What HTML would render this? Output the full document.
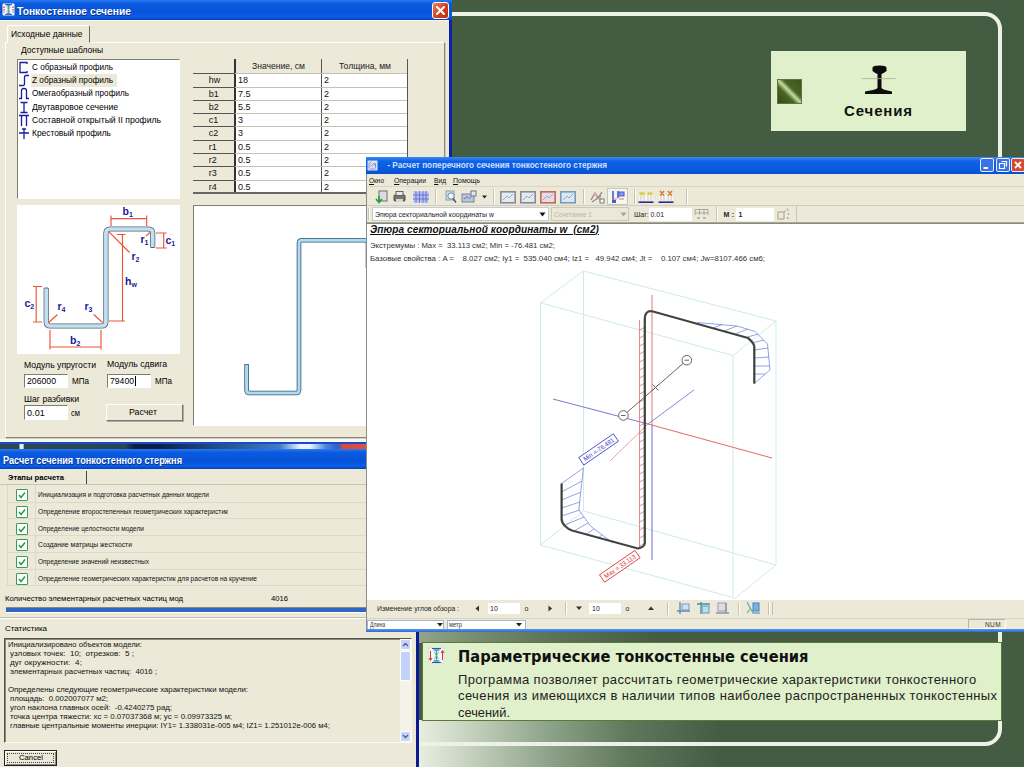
<!DOCTYPE html>
<html lang="ru"><head><meta charset="utf-8"><title>Параметрические тонкостенные сечения</title>
<style>
html,body{margin:0;padding:0;background:#445c42;}
body{width:1024px;height:767px;overflow:hidden;position:relative;font-family:"Liberation Sans",sans-serif;}
#stage{position:absolute;left:0;top:0;width:1024px;height:767px;overflow:hidden;background:#445c42;}
#stage div,#stage span,#stage svg,#stage p{position:absolute;box-sizing:border-box;margin:0;padding:0;}
.t{white-space:pre;font-kerning:none;transform-origin:0 50%;}
.face{background:#ece9d8;}
.sunk{border:1px solid;border-color:#7f7d6f #fff #fff #7f7d6f;background:#fff;}

</style></head>
<body>
<div id="stage">
<div style="left:419px;top:720px;width:605px;height:47px;background:linear-gradient(90deg,#e8eee0 0px,#c6d2be 50px,#90a68c 125px,#5f775b 210px,#445c42 300px);"></div>
<div style="left:419px;top:632px;width:605px;height:11px;background:linear-gradient(90deg,#93a488 0px,#7a8f72 50px,#5c7458 130px,#445c42 240px);"></div>
<div style="left:-60px;top:12px;width:1062px;height:734px;border:4px solid #ecf3e6;border-radius:17px;"></div>
<div style="left:771px;top:51px;width:195px;height:80px;background:#e0f0ca;"></div>
<div style="left:776.5px;top:78.5px;width:25.5px;height:25.5px;background:linear-gradient(45deg,#34481c 0%,#4a6426 36%,#c4dc9c 50%,#4a6426 62%,#3c5420 100%);border:1px solid #5a763c;"></div>
<span class="t" id="t0" style="left:844px;top:101.00px;font:bold 15px/19px 'Liberation Sans',sans-serif;color:#111;letter-spacing:0.873px;">Сечения</span>
<svg style="left:860px;top:62px;" width="38" height="34" viewBox="0 0 38 34"><path d="M12.500 5.500 Q13 3.500 19.500 3.500 Q26 3.500 26.500 5.500 L26.500 9 Q23.500 11.500 21.500 12 L21.500 26 Q22 27.500 32 29.500 L32 32 L5 32 L5 29.500 Q17 27.500 17.500 26 L17.500 12 Q15.500 11.500 12.500 9 Z" fill="#0c0c0c"/><path d="M2 16.600 H35.500" stroke="#a4b096" stroke-width="0.800"/></svg>
<div style="left:422px;top:642px;width:580px;height:79px;background:#e0f0ca;border:1px solid #587a3c;"></div>
<span class="t" id="t1" style="left:458px;top:648.00px;font:bold 15px/19px 'DejaVu Sans','Liberation Sans',sans-serif;color:#111;transform:scaleX(0.9771);">Параметрические тонкостенные сечения</span>
<span class="t" id="t2" style="left:458px;top:671.50px;font:13px/16px 'Liberation Sans',sans-serif;color:#222;letter-spacing:0.384px;">Программа позволяет рассчитать геометрические характеристики тонкостенного</span>
<span class="t" id="t3" style="left:458px;top:688.00px;font:13px/16px 'Liberation Sans',sans-serif;color:#222;letter-spacing:0.408px;">сечения из имеющихся в наличии типов наиболее распространенных тонкостенных</span>
<span class="t" id="t4" style="left:458px;top:704.50px;font:13px/16px 'Liberation Sans',sans-serif;color:#222;transform:scaleX(0.9881);">сечений.</span>
<svg style="left:426.5px;top:645.5px;" width="19" height="19" viewBox="0 0 19 19"><rect x="2" y="2" width="15" height="15" fill="#f4f8fa" stroke="#c8d4dc" stroke-width="0.600"/><path d="M6.500 4 H12.500 M9.500 4 V15 M6.500 15 H12.500" stroke="#3aa0a8" stroke-width="1.500" fill="none"/><path d="M7 6 L12 13 M12 6 L7 13" stroke="#58b070" stroke-width="0.700"/><path d="M3.500 5 V14 M15.500 5 V14 M2 12 L3.500 14.500 L5 12 M14 7 L15.500 4.500 L17 7" stroke="#e03030" stroke-width="1" fill="none"/><path d="M5 2.500 H14 M5 16.500 H14" stroke="#3a48d0" stroke-width="1"/></svg>
<div style="left:0px;top:0px;width:452px;height:442px;background:#ece9d8;border-right:3px solid #0a22a8;"></div>
<div style="left:0px;top:0px;width:452px;height:20px;background:linear-gradient(180deg,#2a78f0 0%,#0a5ae0 18%,#0653d8 60%,#0a5fe8 85%,#0440b8 100%);"></div>
<div style="left:0px;top:20px;width:449px;height:1px;background:#f8f8f4;"></div>
<span class="t" id="t5" style="left:17px;top:3.50px;font:bold 11px/14px 'Liberation Sans',sans-serif;color:#fff;text-shadow:0.5px 0.5px 0 #0a2a80;transform:scaleX(0.9335);">Тонкостенное сечение</span>
<svg style="left:2px;top:3px;" width="13" height="13" viewBox="0 0 13 13"><rect x="0.500" y="0.500" width="12" height="12" rx="1" fill="#f4f8fc"/><path d="M4.500 2.500 H8.500 M6.500 2.500 V10.500 M4.500 10.500 H8.500" stroke="#3aa0b0" stroke-width="1.300" fill="none"/><path d="M4.500 4 L8.500 9 M8.500 4 L4.500 9" stroke="#58b070" stroke-width="0.600"/><path d="M2 3.500 V9.500 M11 3.500 V9.500" stroke="#e03030" stroke-width="1.200" stroke-dasharray="1.500 1"/><path d="M3 1.500 H10 M3 11.500 H10" stroke="#3a48d0" stroke-width="0.900"/></svg>
<div style="left:432px;top:2px;width:17px;height:17px;background:linear-gradient(135deg,#e8805f,#d4401c 55%,#b83010);border:1px solid #fff;border-radius:3px;"></div>
<svg style="left:432px;top:2px;" width="17" height="17" viewBox="0 0 17 17"><path d="M5 5 L12 12 M12 5 L5 12" stroke="#fff" stroke-width="2" stroke-linecap="round"/></svg>
<div style="left:5px;top:42px;width:440px;height:396px;background:#ece9d8;border:1px solid;border-color:#fff #8a8878 #8a8878 #fff;box-shadow:1px 1px 0 #d0cdbd;"></div>
<div style="left:7px;top:25px;width:83px;height:18px;background:#ece9d8;border:1px solid;border-color:#fff #6a685c #ece9d8 #fff;border-radius:2px 2px 0 0;"></div>
<span class="t" id="t6" style="left:10.5px;top:28.50px;font:9px/11px 'Liberation Sans',sans-serif;color:#000;transform:scaleX(0.9402);">Исходные данные</span>
<span class="t" id="t7" style="left:21px;top:45.00px;font:9px/11px 'Liberation Sans',sans-serif;color:#000;transform:scaleX(0.9422);">Доступные шаблоны</span>
<div class="sunk" style="left:17px;top:59px;width:163px;height:140px;"></div>
<div style="left:31px;top:74px;width:86px;height:13px;background:#ece9d8;"></div>
<span class="t" id="t8" style="left:32px;top:62.00px;font:9px/11px 'Liberation Sans',sans-serif;color:#000;transform:scaleX(0.9058);">С образный профиль</span>
<span class="t" id="t9" style="left:32px;top:75.20px;font:9px/11px 'Liberation Sans',sans-serif;color:#000;transform:scaleX(0.9161);">Z образный профиль</span>
<span class="t" id="t10" style="left:32px;top:88.40px;font:9px/11px 'Liberation Sans',sans-serif;color:#000;transform:scaleX(0.9089);">Омегаобразный профиль</span>
<span class="t" id="t11" style="left:32px;top:101.60px;font:9px/11px 'Liberation Sans',sans-serif;color:#000;transform:scaleX(0.9546);">Двутавровое сечение</span>
<span class="t" id="t12" style="left:32px;top:114.80px;font:9px/11px 'Liberation Sans',sans-serif;color:#000;transform:scaleX(0.9588);">Составной открытый II профиль</span>
<span class="t" id="t13" style="left:32px;top:128.00px;font:9px/11px 'Liberation Sans',sans-serif;color:#000;transform:scaleX(0.9313);">Крестовый профиль</span>
<svg style="left:18px;top:61.0px;" width="12" height="13" viewBox="0 0 12 13"><g fill="none" stroke="#1c1c9c" stroke-width="1.3"><path d="M9 3 V1.5 H2 V11.5 H9 V10" /></g></svg>
<svg style="left:18px;top:74.2px;" width="12" height="13" viewBox="0 0 12 13"><g fill="none" stroke="#1c1c9c" stroke-width="1.3"><path d="M1 11.5 H5 Q6.5 11.5 6.5 10 V3 Q6.5 1.5 8 1.5 H11" /></g></svg>
<svg style="left:18px;top:87.4px;" width="12" height="13" viewBox="0 0 12 13"><g fill="none" stroke="#1c1c9c" stroke-width="1.3"><path d="M1 11.5 H3.5 V3.5 Q3.5 1.5 6 1.5 Q8.5 1.5 8.5 3.5 V11.5 H11" /></g></svg>
<svg style="left:18px;top:100.6px;" width="12" height="13" viewBox="0 0 12 13"><g fill="none" stroke="#1c1c9c" stroke-width="1.3"><path d="M2.5 1.5 H9.500 M6 1.5 V11.5 M2.5 11.5 H9.5" /></g></svg>
<svg style="left:18px;top:113.8px;" width="12" height="13" viewBox="0 0 12 13"><g fill="none" stroke="#1c1c9c" stroke-width="1.3"><path d="M1 1.5 H11 M3.5 1.5 V12 M8.5 1.5 V12" /></g></svg>
<svg style="left:18px;top:127.0px;" width="12" height="13" viewBox="0 0 12 13"><g fill="none" stroke="#1c1c9c" stroke-width="1.3"><path d="M1 6 H11 M6 2 V12 M4 2 H8" /></g></svg>
<div style="left:193px;top:73px;width:215px;height:121px;background:#fff;"></div>
<div style="left:193px;top:73px;width:42px;height:121px;background:#ece9d8;"></div>
<div style="left:234px;top:59px;width:174px;height:15px;background:#ece9d8;border-bottom:1px solid #444;"></div>
<div style="left:234px;top:59px;width:2px;height:135px;background:#333;"></div>
<div style="left:321px;top:59px;width:1px;height:135px;background:#555;"></div>
<div style="left:407px;top:59px;width:1px;height:135px;background:#555;"></div>
<div style="left:193px;top:192px;width:215px;height:2px;background:#666;"></div>
<span class="t" id="t14" style="left:251.5px;top:61.00px;font:9px/11px 'Liberation Sans',sans-serif;color:#222;transform:scaleX(0.9531);">Значение, см</span>
<span class="t" id="t15" style="left:339px;top:61.00px;font:9px/11px 'Liberation Sans',sans-serif;color:#222;transform:scaleX(0.9517);">Толщина, мм</span>
<div style="left:235px;top:73px;width:172px;height:1px;background:#c4c2b6;"></div>
<div style="left:193px;top:73px;width:42px;height:1px;background:#555;"></div>
<span class="t" id="t16" style="left:208.8px;top:75.20px;font:9px/11px 'Liberation Sans',sans-serif;color:#111;">hw</span>
<span class="t" id="t17" style="left:238px;top:75.20px;font:9px/11px 'Liberation Sans',sans-serif;color:#111;">18</span>
<span class="t" id="t18" style="left:324px;top:75.20px;font:9px/11px 'Liberation Sans',sans-serif;color:#111;">2</span>
<div style="left:235px;top:87px;width:172px;height:1px;background:#c4c2b6;"></div>
<div style="left:193px;top:87px;width:42px;height:1px;background:#555;"></div>
<span class="t" id="t19" style="left:208.8px;top:88.50px;font:9px/11px 'Liberation Sans',sans-serif;color:#111;">b1</span>
<span class="t" id="t20" style="left:238px;top:88.50px;font:9px/11px 'Liberation Sans',sans-serif;color:#111;">7.5</span>
<span class="t" id="t21" style="left:324px;top:88.50px;font:9px/11px 'Liberation Sans',sans-serif;color:#111;">2</span>
<div style="left:235px;top:100px;width:172px;height:1px;background:#c4c2b6;"></div>
<div style="left:193px;top:100px;width:42px;height:1px;background:#555;"></div>
<span class="t" id="t22" style="left:208.8px;top:101.80px;font:9px/11px 'Liberation Sans',sans-serif;color:#111;">b2</span>
<span class="t" id="t23" style="left:238px;top:101.80px;font:9px/11px 'Liberation Sans',sans-serif;color:#111;">5.5</span>
<span class="t" id="t24" style="left:324px;top:101.80px;font:9px/11px 'Liberation Sans',sans-serif;color:#111;">2</span>
<div style="left:235px;top:113px;width:172px;height:1px;background:#c4c2b6;"></div>
<div style="left:193px;top:113px;width:42px;height:1px;background:#555;"></div>
<span class="t" id="t25" style="left:208.8px;top:115.10px;font:9px/11px 'Liberation Sans',sans-serif;color:#111;">c1</span>
<span class="t" id="t26" style="left:238px;top:115.10px;font:9px/11px 'Liberation Sans',sans-serif;color:#111;">3</span>
<span class="t" id="t27" style="left:324px;top:115.10px;font:9px/11px 'Liberation Sans',sans-serif;color:#111;">2</span>
<div style="left:235px;top:126px;width:172px;height:1px;background:#c4c2b6;"></div>
<div style="left:193px;top:126px;width:42px;height:1px;background:#555;"></div>
<span class="t" id="t28" style="left:208.8px;top:128.40px;font:9px/11px 'Liberation Sans',sans-serif;color:#111;">c2</span>
<span class="t" id="t29" style="left:238px;top:128.40px;font:9px/11px 'Liberation Sans',sans-serif;color:#111;">3</span>
<span class="t" id="t30" style="left:324px;top:128.40px;font:9px/11px 'Liberation Sans',sans-serif;color:#111;">2</span>
<div style="left:235px;top:140px;width:172px;height:1px;background:#c4c2b6;"></div>
<div style="left:193px;top:140px;width:42px;height:1px;background:#555;"></div>
<span class="t" id="t31" style="left:208.8px;top:141.70px;font:9px/11px 'Liberation Sans',sans-serif;color:#111;">r1</span>
<span class="t" id="t32" style="left:238px;top:141.70px;font:9px/11px 'Liberation Sans',sans-serif;color:#111;">0.5</span>
<span class="t" id="t33" style="left:324px;top:141.70px;font:9px/11px 'Liberation Sans',sans-serif;color:#111;">2</span>
<div style="left:235px;top:153px;width:172px;height:1px;background:#c4c2b6;"></div>
<div style="left:193px;top:153px;width:42px;height:1px;background:#555;"></div>
<span class="t" id="t34" style="left:208.8px;top:155.00px;font:9px/11px 'Liberation Sans',sans-serif;color:#111;">r2</span>
<span class="t" id="t35" style="left:238px;top:155.00px;font:9px/11px 'Liberation Sans',sans-serif;color:#111;">0.5</span>
<span class="t" id="t36" style="left:324px;top:155.00px;font:9px/11px 'Liberation Sans',sans-serif;color:#111;">2</span>
<div style="left:235px;top:166px;width:172px;height:1px;background:#c4c2b6;"></div>
<div style="left:193px;top:166px;width:42px;height:1px;background:#555;"></div>
<span class="t" id="t37" style="left:208.8px;top:168.30px;font:9px/11px 'Liberation Sans',sans-serif;color:#111;">r3</span>
<span class="t" id="t38" style="left:238px;top:168.30px;font:9px/11px 'Liberation Sans',sans-serif;color:#111;">0.5</span>
<span class="t" id="t39" style="left:324px;top:168.30px;font:9px/11px 'Liberation Sans',sans-serif;color:#111;">2</span>
<div style="left:235px;top:180px;width:172px;height:1px;background:#c4c2b6;"></div>
<div style="left:193px;top:180px;width:42px;height:1px;background:#555;"></div>
<span class="t" id="t40" style="left:208.8px;top:181.60px;font:9px/11px 'Liberation Sans',sans-serif;color:#111;">r4</span>
<span class="t" id="t41" style="left:238px;top:181.60px;font:9px/11px 'Liberation Sans',sans-serif;color:#111;">0.5</span>
<span class="t" id="t42" style="left:324px;top:181.60px;font:9px/11px 'Liberation Sans',sans-serif;color:#111;">2</span>
<div style="left:17px;top:205px;width:163px;height:149px;background:#fff;"></div>
<div class="sunk" style="left:193px;top:205px;width:252px;height:221px;"></div>
<svg style="left:17px;top:205px;" width="163" height="149" viewBox="17 205 163 149"><path d="M152.700 247.500 V233.300 Q152.700 229 148.400 229 H110.200 Q105.900 229 105.900 233.300 V321.700 Q105.900 326 101.600 326 H50.500 Q46.200 326 46.200 321.700 V288" stroke="#59636b" stroke-width="5.200" fill="none"/><path d="M152.700 247.500 V233.300 Q152.700 229 148.400 229 H110.200 Q105.900 229 105.900 233.300 V321.700 Q105.900 326 101.600 326 H50.500 Q46.200 326 46.200 321.700 V288" stroke="#c2e0f4" stroke-width="3.700" fill="none"/><path d="M150.900 247.500 H154.500 M44.400 288 H48" stroke="#4a545c" stroke-width="0.900"/><g stroke="#ec5436" stroke-width="1.150" fill="none"><path d="M111 218.600 H146.700 M111 215.500 V226 M146.700 215.500 V226 M146 236 L150.600 231.800"/><path d="M163.700 233 V248 M156 233 H166.500 M156 248 H166.500"/><path d="M122.500 234.500 V321 M117 234.500 H125.500 M109 321 H125"/><path d="M109 231.800 L129.500 252.500"/><path d="M36.200 286.500 V322 M33 286.500 H42 M33 322 H42"/><path d="M50 347 H101 M50 330 V349.500 M101 330 V349.500"/><path d="M57.500 314.500 L48.700 322.500 M93.700 314.500 L102.500 322.500"/></g><text x="122.5" y="215" font-family="Liberation Sans, sans-serif" font-weight="bold" font-size="10.500" fill="#1a1a9a">b<tspan font-size="7" dy="2">1</tspan></text><text x="140.5" y="242.5" font-family="Liberation Sans, sans-serif" font-weight="bold" font-size="10.500" fill="#1a1a9a">r<tspan font-size="7" dy="2">1</tspan></text><text x="165.5" y="244" font-family="Liberation Sans, sans-serif" font-weight="bold" font-size="10.500" fill="#1a1a9a">c<tspan font-size="7" dy="2">1</tspan></text><text x="131.5" y="259.5" font-family="Liberation Sans, sans-serif" font-weight="bold" font-size="10.500" fill="#1a1a9a">r<tspan font-size="7" dy="2">2</tspan></text><text x="125" y="285" font-family="Liberation Sans, sans-serif" font-weight="bold" font-size="10.500" fill="#1a1a9a">h<tspan font-size="7" dy="2">w</tspan></text><text x="24.5" y="307" font-family="Liberation Sans, sans-serif" font-weight="bold" font-size="10.500" fill="#1a1a9a">c<tspan font-size="7" dy="2">2</tspan></text><text x="57.5" y="309.5" font-family="Liberation Sans, sans-serif" font-weight="bold" font-size="10.500" fill="#1a1a9a">r<tspan font-size="7" dy="2">4</tspan></text><text x="84.5" y="310" font-family="Liberation Sans, sans-serif" font-weight="bold" font-size="10.500" fill="#1a1a9a">r<tspan font-size="7" dy="2">3</tspan></text><text x="70" y="343.5" font-family="Liberation Sans, sans-serif" font-weight="bold" font-size="10.500" fill="#1a1a9a">b<tspan font-size="7" dy="2">2</tspan></text></svg>
<svg style="left:194px;top:207px;" width="250" height="219" viewBox="194 207 250 219"><path d="M368 268 V243.200 Q368 240.200 365 240.200 H302 Q299 240.200 299 243.200 V390 Q299 393 296 393 H249.600 Q246.600 393 246.600 390 V364.600" stroke="#3f5666" stroke-width="4.600" fill="none"/><path d="M368 268 V243.200 Q368 240.200 365 240.200 H302 Q299 240.200 299 243.200 V390 Q299 393 296 393 H249.600 Q246.600 393 246.600 390 V364.600" stroke="#a9dcf6" stroke-width="3" fill="none"/><path d="M244.300 364.600 H248.900" stroke="#3f5666" stroke-width="0.800"/></svg>
<span class="t" id="t43" style="left:24px;top:359.50px;font:9px/11px 'Liberation Sans',sans-serif;color:#000;transform:scaleX(0.9610);">Модуль упругости</span>
<span class="t" id="t44" style="left:107px;top:358.50px;font:9px/11px 'Liberation Sans',sans-serif;color:#000;transform:scaleX(0.9668);">Модуль сдвига</span>
<div class="sunk" style="left:24px;top:374px;width:44px;height:14px;"></div>
<div class="sunk" style="left:107px;top:374px;width:44px;height:14px;"></div>
<span class="t" id="t45" style="left:27px;top:376.00px;font:9px/11px 'Liberation Sans',sans-serif;color:#000;transform:scaleX(0.9652);">206000</span>
<span class="t" id="t46" style="left:110px;top:376.00px;font:9px/11px 'Liberation Sans',sans-serif;color:#000;transform:scaleX(0.9588);">79400</span>
<div style="left:134.5px;top:376px;width:1px;height:10px;background:#000;"></div>
<span class="t" id="t47" style="left:72px;top:376.00px;font:9px/11px 'Liberation Sans',sans-serif;color:#000;transform:scaleX(0.8955);">МПа</span>
<span class="t" id="t48" style="left:155px;top:376.00px;font:9px/11px 'Liberation Sans',sans-serif;color:#000;transform:scaleX(0.8955);">МПа</span>
<span class="t" id="t49" style="left:24px;top:394.00px;font:9px/11px 'Liberation Sans',sans-serif;color:#000;transform:scaleX(0.9665);">Шаг разбивки</span>
<div class="sunk" style="left:24px;top:405px;width:44px;height:15px;"></div>
<span class="t" id="t50" style="left:27px;top:407.50px;font:9px/11px 'Liberation Sans',sans-serif;color:#000;letter-spacing:0.117px;">0.01</span>
<span class="t" id="t51" style="left:71px;top:407.50px;font:9px/11px 'Liberation Sans',sans-serif;color:#000;transform:scaleX(0.8421);">см</span>
<div style="left:106px;top:404px;width:77px;height:17px;background:#ece9d8;border:1px solid;border-color:#fff #777 #777 #fff;box-shadow:1px 1px 0 #aaa;"></div>
<span class="t" id="t52" style="left:129px;top:407.00px;font:9px/11px 'Liberation Sans',sans-serif;color:#000;transform:scaleX(0.9776);">Расчет</span>
<div style="left:0px;top:439px;width:449.7px;height:3px;background:#faf9f4;"></div>
<div style="left:0px;top:442px;width:366px;height:7px;background:linear-gradient(90deg,#2c4a4e 0px,#2c4a4e 19px,#e8eef0 20px,#e8eef0 23px,#2c4a4e 24.500px,#27464e 125px,#0a1e48 135px,#0a1e48 158px,#173a6c 190px,#2a5e9c 240px,#3f7cc8 280px,#e8f4ff 300px,#e8f4ff 310px,#4a86dc 326px,#2a62c8 338px,#d84a3a 343px,#e05040 366px);border-top:2px solid #174ad0;"></div>
<div style="left:0px;top:449px;width:419px;height:318px;background:#ece9d8;border-right:3px solid #0a1a90;"></div>
<div style="left:0px;top:449px;width:419px;height:20px;background:linear-gradient(180deg,#2a78f0 0%,#0a5ae0 18%,#0653d8 60%,#0a5fe8 85%,#0440b8 100%);"></div>
<span class="t" id="t53" style="left:3px;top:452.50px;font:bold 11px/14px 'Liberation Sans',sans-serif;color:#fff;text-shadow:0.5px 0.5px 0 #0a2a80;transform:scaleX(0.8336);">Расчет сечения тонкостенного стержня</span>
<span class="t" id="t54" style="left:8px;top:473.00px;font:bold 8px/10px 'Liberation Sans',sans-serif;color:#000;transform:scaleX(0.9509);">Этапы расчета</span>
<div style="left:86px;top:471px;width:1px;height:13px;background:#444;"></div>
<div style="left:0px;top:484px;width:417px;height:1px;background:#c9c6b6;"></div>
<div style="left:7px;top:501.5px;width:410px;height:1px;background:#dcd9c8;"></div>
<div style="left:16px;top:489.0px;width:12px;height:12px;background:#fff;border:1px solid #3a9a5a;border-radius:1px;"></div>
<svg style="left:16px;top:489.0px;" width="12" height="12" viewBox="0 0 12 12"><path d="M3 6 L5 8.5 L9 3.5" stroke="#2a9a4a" stroke-width="1.5" fill="none"/></svg>
<span class="t" id="t55" style="left:38px;top:490.00px;font:7px/9px 'Liberation Sans',sans-serif;color:#111;transform:scaleX(0.9328);">Инициализация и подготовка расчетных данных модели</span>
<div style="left:7px;top:518.25px;width:410px;height:1px;background:#dcd9c8;"></div>
<div style="left:16px;top:505.75px;width:12px;height:12px;background:#fff;border:1px solid #3a9a5a;border-radius:1px;"></div>
<svg style="left:16px;top:505.75px;" width="12" height="12" viewBox="0 0 12 12"><path d="M3 6 L5 8.5 L9 3.5" stroke="#2a9a4a" stroke-width="1.5" fill="none"/></svg>
<span class="t" id="t56" style="left:38px;top:506.75px;font:7px/9px 'Liberation Sans',sans-serif;color:#111;transform:scaleX(0.9459);">Определение второстепенных геометрических характеристик</span>
<div style="left:7px;top:535.0px;width:410px;height:1px;background:#dcd9c8;"></div>
<div style="left:16px;top:522.5px;width:12px;height:12px;background:#fff;border:1px solid #3a9a5a;border-radius:1px;"></div>
<svg style="left:16px;top:522.5px;" width="12" height="12" viewBox="0 0 12 12"><path d="M3 6 L5 8.5 L9 3.5" stroke="#2a9a4a" stroke-width="1.5" fill="none"/></svg>
<span class="t" id="t57" style="left:38px;top:523.50px;font:7px/9px 'Liberation Sans',sans-serif;color:#111;transform:scaleX(0.9366);">Определение целостности модели</span>
<div style="left:7px;top:551.75px;width:410px;height:1px;background:#dcd9c8;"></div>
<div style="left:16px;top:539.25px;width:12px;height:12px;background:#fff;border:1px solid #3a9a5a;border-radius:1px;"></div>
<svg style="left:16px;top:539.25px;" width="12" height="12" viewBox="0 0 12 12"><path d="M3 6 L5 8.5 L9 3.5" stroke="#2a9a4a" stroke-width="1.5" fill="none"/></svg>
<span class="t" id="t58" style="left:38px;top:540.25px;font:7px/9px 'Liberation Sans',sans-serif;color:#111;transform:scaleX(0.9691);">Создание матрицы жесткости</span>
<div style="left:7px;top:568.5px;width:410px;height:1px;background:#dcd9c8;"></div>
<div style="left:16px;top:556.0px;width:12px;height:12px;background:#fff;border:1px solid #3a9a5a;border-radius:1px;"></div>
<svg style="left:16px;top:556.0px;" width="12" height="12" viewBox="0 0 12 12"><path d="M3 6 L5 8.5 L9 3.5" stroke="#2a9a4a" stroke-width="1.5" fill="none"/></svg>
<span class="t" id="t59" style="left:38px;top:557.00px;font:7px/9px 'Liberation Sans',sans-serif;color:#111;transform:scaleX(0.9272);">Определение значений неизвестных</span>
<div style="left:7px;top:585.25px;width:410px;height:1px;background:#dcd9c8;"></div>
<div style="left:16px;top:572.75px;width:12px;height:12px;background:#fff;border:1px solid #3a9a5a;border-radius:1px;"></div>
<svg style="left:16px;top:572.75px;" width="12" height="12" viewBox="0 0 12 12"><path d="M3 6 L5 8.5 L9 3.5" stroke="#2a9a4a" stroke-width="1.5" fill="none"/></svg>
<span class="t" id="t60" style="left:38px;top:573.75px;font:7px/9px 'Liberation Sans',sans-serif;color:#111;transform:scaleX(0.9423);">Определение геометрических характеристик для расчетов на кручение</span>
<div style="left:35px;top:485px;width:1px;height:101px;background:#dcd9c8;"></div>
<div style="left:7px;top:485px;width:1px;height:101px;background:#dcd9c8;"></div>
<span class="t" id="t61" style="left:5px;top:593.50px;font:8px/10px 'Liberation Sans',sans-serif;color:#000;transform:scaleX(0.9640);">Количество элементарных расчетных частиц мод</span>
<span class="t" id="t62" style="left:271px;top:593.50px;font:8px/10px 'Liberation Sans',sans-serif;color:#000;transform:scaleX(0.9552);">4016</span>
<div style="left:6px;top:607px;width:411px;height:6px;background:#2f66c6;border-top:1px solid #8a8878;border-bottom:1px solid #fff;"></div>
<div style="left:0px;top:617px;width:417px;height:1px;background:#c0bdae;"></div>
<div style="left:0px;top:618px;width:417px;height:1px;background:#fff;"></div>
<span class="t" id="t63" style="left:5px;top:624.00px;font:8px/10px 'Liberation Sans',sans-serif;color:#000;transform:scaleX(0.9996);">Статистика</span>
<div style="left:4px;top:638px;width:408px;height:105px;background:#ece9d8;border:1px solid;border-color:#55534a #f8f8f0 #f8f8f0 #55534a;box-shadow:inset 1px 1px 0 #8a887a;"></div>
<span class="t" id="t64" style="left:8px;top:639.50px;font:8px/10px 'Liberation Sans',sans-serif;color:#111;transform:scaleX(0.9551);">Инициализировано объектов модели:</span>
<span class="t" id="t65" style="left:10px;top:648.60px;font:8px/10px 'Liberation Sans',sans-serif;color:#111;letter-spacing:0.017px;">узловых точек:  10;  отрезков:  5 ;</span>
<span class="t" id="t66" style="left:10px;top:657.70px;font:8px/10px 'Liberation Sans',sans-serif;color:#111;letter-spacing:0.110px;">дуг окружности:  4;</span>
<span class="t" id="t67" style="left:10px;top:666.80px;font:8px/10px 'Liberation Sans',sans-serif;color:#111;transform:scaleX(0.9689);">элементарных расчетных частиц:  4016 ;</span>
<span class="t" id="t68" style="left:8px;top:685.00px;font:8px/10px 'Liberation Sans',sans-serif;color:#111;transform:scaleX(0.9747);">Определены следующие геометрические характеристики модели:</span>
<span class="t" id="t69" style="left:10px;top:694.10px;font:8px/10px 'Liberation Sans',sans-serif;color:#111;transform:scaleX(0.9685);">площадь:  0.002007077 м2;</span>
<span class="t" id="t70" style="left:10px;top:703.20px;font:8px/10px 'Liberation Sans',sans-serif;color:#111;transform:scaleX(0.9777);">угол наклона главных осей:  -0.4240275 рад;</span>
<span class="t" id="t71" style="left:10px;top:712.30px;font:8px/10px 'Liberation Sans',sans-serif;color:#111;transform:scaleX(0.9833);">точка центра тяжести: xc = 0.07037368 м; yc = 0.09973325 м;</span>
<span class="t" id="t72" style="left:10px;top:721.40px;font:8px/10px 'Liberation Sans',sans-serif;color:#111;transform:scaleX(0.9630);">главные центральные моменты инерции: IY1= 1.338031e-005 м4; IZ1= 1.251012e-006 м4;</span>
<div style="left:400px;top:639px;width:11px;height:103px;background:#f4f3ea;"></div>
<div style="left:400px;top:639px;width:11px;height:11px;background:#c6d4f8;border:1px solid #fff;border-radius:2px;"></div>
<div style="left:400px;top:731px;width:11px;height:11px;background:#c6d4f8;border:1px solid #fff;border-radius:2px;"></div>
<div style="left:400px;top:651px;width:11px;height:30px;background:#c2d2fa;border:1px solid #fff;border-radius:2px;"></div>
<svg style="left:400px;top:639px;" width="11" height="11" viewBox="0 0 11 11"><path d="M3 7 L5.5 4.500 L8 7" stroke="#4a60a0" stroke-width="1.4" fill="none"/></svg>
<svg style="left:400px;top:731px;" width="11" height="11" viewBox="0 0 11 11"><path d="M3 4 L5.5 6.500 L8 4" stroke="#4a60a0" stroke-width="1.4" fill="none"/></svg>
<div style="left:4px;top:750px;width:53px;height:16px;background:#ece9d8;border:1px solid #222;box-shadow:inset 1px 1px 0 #fff, inset -1px -1px 0 #888;"></div>
<div style="left:7px;top:753px;width:47px;height:10px;border:1px dotted #444;"></div>
<span class="t" id="t73" style="left:18.5px;top:753.00px;font:8px/10px 'Liberation Sans',sans-serif;color:#000;transform:scaleX(0.9636);">Cancel</span>
<div style="left:366px;top:157px;width:658px;height:475px;background:#ece9d8;border-left:1.200px solid #8c8c8c;"></div>
<div style="left:366px;top:157px;width:658px;height:17px;background:linear-gradient(180deg,#3a88f4 0%,#0f62e6 25%,#0a5ae0 70%,#0a50d0 100%);"></div>
<span class="t" id="t74" style="left:385px;top:160.00px;font:bold 9px/11px 'Liberation Sans',sans-serif;color:#cfe0ff;transform:scaleX(0.9131);"> - Расчет поперечного сечения тонкостенного стержня</span>
<svg style="left:367px;top:159.5px;" width="11" height="11" viewBox="0 0 11 11"><rect x="0.500" y="0.500" width="10" height="10" fill="#d4e2fa"/><path d="M2 8.500 V3.500 L4 2 M3 9 H8.500 M8.500 3 V8" stroke="#8a9ac8" fill="none"/><circle cx="5" cy="5.500" r="1.800" fill="#e8b8c8"/><path d="M6 3 L8.500 5.500" stroke="#7a8a9a"/></svg>
<div style="left:980px;top:158px;width:14px;height:14px;background:#3a72e8;border:1px solid #e8eefc;border-radius:2px;"></div>
<div style="left:995.5px;top:158px;width:14px;height:14px;background:#3a72e8;border:1px solid #e8eefc;border-radius:2px;"></div>
<div style="left:1011px;top:158px;width:14px;height:14px;background:#d8482a;border:1px solid #e8eefc;border-radius:2px;"></div>
<svg style="left:980px;top:158px;" width="14" height="14" viewBox="0 0 14 14"><path d="M3.5 10 H8" stroke="#fff" stroke-width="2"/></svg>
<svg style="left:995.5px;top:158px;" width="14" height="14" viewBox="0 0 14 14"><path d="M5.5 3.5 H10.5 V8.5 M3.5 5.5 H8.5 V10.5 H3.500 Z" stroke="#fff" stroke-width="1.2" fill="none"/></svg>
<svg style="left:1011px;top:158px;" width="14" height="14" viewBox="0 0 14 14"><path d="M4 4 L10 10 M10 4 L4 10" stroke="#fff" stroke-width="1.8"/></svg>
<span class="t" id="t75" style="left:369px;top:175.50px;font:7px/9px 'Liberation Sans',sans-serif;color:#111;transform:scaleX(0.9213);"><u>О</u>кно</span>
<span class="t" id="t76" style="left:394px;top:175.50px;font:7px/9px 'Liberation Sans',sans-serif;color:#111;transform:scaleX(0.9766);"><u>О</u>перации</span>
<span class="t" id="t77" style="left:434px;top:175.50px;font:7px/9px 'Liberation Sans',sans-serif;color:#111;transform:scaleX(0.9470);"><u>В</u>ид</span>
<span class="t" id="t78" style="left:453px;top:175.50px;font:7px/9px 'Liberation Sans',sans-serif;color:#111;transform:scaleX(0.9983);"><u>П</u>омощь</span>
<div style="left:367px;top:186px;width:657px;height:1px;background:#d8d5c4;"></div>
<div style="left:367px;top:205px;width:657px;height:1px;background:#d0cdbc;"></div>
<div style="left:367px;top:223px;width:657px;height:377px;background:#fff;border-top:1px solid #8a8878;"></div>
<div style="left:367px;top:222px;width:657px;height:1px;background:#aaa898;"></div>
<svg style="left:375px;top:190px;" width="13" height="14" viewBox="0 0 13 14"><rect x="4" y="1" width="8" height="10" fill="#d8dde2" stroke="#6a7078"/><path d="M1 9 L4 12.5 L7 9 M4 12 V6" stroke="#2a9a4a" stroke-width="1.6" fill="none"/></svg>
<svg style="left:393px;top:190px;" width="13" height="14" viewBox="0 0 13 14"><rect x="1" y="5" width="11" height="6" rx="1" fill="#77756f" stroke="#4a4a46"/><rect x="3" y="1.5" width="7" height="4" fill="#e8e8e4" stroke="#66645e"/><rect x="3" y="9" width="7" height="3" fill="#d8d8d2"/></svg>
<svg style="left:413px;top:190px;" width="16" height="14" viewBox="0 0 16 14"><rect x="0.5" y="1.5" width="15" height="11" fill="#b9c0ee"/><path d="M3 1 V13 M6.500 1 V13 M10 1 V13 M13 1 V13 M0 5 H16 M0 9 H16" stroke="#6a74d8" stroke-width="1"/></svg>
<div style="left:435px;top:189px;width:1px;height:15px;background:#c5c2b2;"></div>
<div style="left:436px;top:189px;width:1px;height:15px;background:#fff;"></div>
<svg style="left:445px;top:190px;" width="12" height="14" viewBox="0 0 12 14"><rect x="1" y="1" width="8" height="9" fill="#cfe0ea" stroke="#8aa0b0"/><circle cx="6" cy="6" r="3.2" fill="#e8f4fa" stroke="#6a8aa0"/><path d="M8 8.500 L11 12.500" stroke="#556" stroke-width="1.6"/></svg>
<svg style="left:461px;top:190px;" width="17" height="14" viewBox="0 0 17 14"><rect x="1" y="4" width="12" height="8" fill="#b8c4d8" stroke="#7a86a0"/><rect x="10" y="1" width="5" height="5" fill="#e4e8f0" stroke="#6a7690"/><path d="M3 9 L6 6.500 L8 8.500 L10 6.500" stroke="#6a7aa0" fill="none"/></svg>
<svg style="left:482px;top:195px;" width="5" height="4" viewBox="0 0 5 4"><path d="M0 0.500 H5 L2.500 3.500 Z" fill="#222"/></svg>
<div style="left:493px;top:189px;width:1px;height:15px;background:#c5c2b2;"></div>
<div style="left:494px;top:189px;width:1px;height:15px;background:#fff;"></div>
<svg style="left:500px;top:190px;" width="16" height="14" viewBox="0 0 16 14"><rect x="0.8" y="1.800" width="14.400" height="11" fill="#e4eaf2" stroke="#8a8a90" stroke-width="1.6"/><path d="M3 10 L7 6 L9 8 L13 4" stroke="#9ab" fill="none"/></svg>
<svg style="left:520px;top:190px;" width="16" height="14" viewBox="0 0 16 14"><rect x="0.8" y="1.800" width="14.400" height="11" fill="#e4eaf2" stroke="#8a8a90" stroke-width="1.6"/><path d="M3 10 L7 6 L9 8 L13 4" stroke="#9ab" fill="none"/></svg>
<svg style="left:540px;top:190px;" width="16" height="14" viewBox="0 0 16 14"><rect x="0.8" y="1.800" width="14.400" height="11" fill="#e8d8e8" stroke="#c06a5a" stroke-width="1.6"/><path d="M3 10 L7 6 L9 8 L13 4" stroke="#9ab" fill="none"/></svg>
<svg style="left:560px;top:190px;" width="16" height="14" viewBox="0 0 16 14"><rect x="0.8" y="1.800" width="14.400" height="11" fill="#d8e8f2" stroke="#7a9ab8" stroke-width="1.6"/><path d="M3 10 L7 6 L9 8 L13 4" stroke="#9ab" fill="none"/></svg>
<div style="left:583px;top:189px;width:1px;height:15px;background:#c5c2b2;"></div>
<div style="left:584px;top:189px;width:1px;height:15px;background:#fff;"></div>
<svg style="left:589px;top:190px;" width="16" height="14" viewBox="0 0 16 14"><path d="M2 10 L6 3 L9 8 L13 2 M3 12 L12 6" stroke="#8a8a86" stroke-width="1.300" fill="none"/><circle cx="6" cy="4" r="1.500" fill="#e8a0b0"/><circle cx="11" cy="9" r="1.500" fill="#e8a0b0"/><rect x="11" y="9" width="4" height="4" fill="#fff" stroke="#777"/></svg>
<div style="left:607px;top:188px;width:21px;height:17px;background:#f6f5ee;border:1px solid #c8c6b8;"></div>
<svg style="left:610px;top:190px;" width="16" height="14" viewBox="0 0 16 14"><path d="M3 1 V13 M8 1 V8" stroke="#4a5ad0" stroke-width="1.600"/><rect x="9" y="2" width="5" height="4" fill="#8a9ae8" stroke="#4a5ad0"/><path d="M2 9 H7 M9 9 H14" stroke="#d07a8a"/><rect x="2" y="10" width="4" height="3" fill="#4a5ad0"/></svg>
<div style="left:634px;top:189px;width:1px;height:15px;background:#c5c2b2;"></div>
<div style="left:635px;top:189px;width:1px;height:15px;background:#fff;"></div>
<svg style="left:638px;top:190px;" width="16" height="14" viewBox="0 0 16 14"><rect x="1" y="5" width="14" height="6" fill="#f8f8f0"/><path d="M3 5 V11 M6 5 V11 M10 5 V11 M13 5 V11" stroke="#c8c8b8"/><path d="M1.500 3.500 H6.500 M9.500 3.500 H14.500" stroke="#d8d040" stroke-width="2.400"/><path d="M0.500 12.200 H15.500" stroke="#2a2a9a" stroke-width="1.600"/></svg>
<svg style="left:658px;top:190px;" width="16" height="14" viewBox="0 0 16 14"><rect x="1" y="5" width="14" height="6" fill="#f8f8f0"/><path d="M3 5 V11 M6 5 V11 M10 5 V11 M13 5 V11" stroke="#c8c8b8"/><path d="M2 1 L6 5.500 M6 1 L2 5.500 M10 1 L14 5.500 M14 1 L10 5.500" stroke="#d8783a" stroke-width="1.500"/><path d="M0.500 12.200 H15.500" stroke="#2a2a9a" stroke-width="1.600"/></svg>
<div style="left:686px;top:189px;width:1px;height:15px;background:#c5c2b2;"></div>
<div style="left:687px;top:189px;width:1px;height:15px;background:#fff;"></div>
<div style="left:367px;top:206px;width:430px;height:16px;border-right:1px solid #c8c5b5;"></div>
<div style="left:368px;top:208px;width:2px;height:12px;border-left:1px solid #c5c2b2;border-right:1px solid #fff;"></div>
<div style="left:372px;top:207px;width:177px;height:14px;background:#fff;border:1px solid #c4cad6;"></div>
<span class="t" id="t79" style="left:374.5px;top:210.00px;font:7px/9px 'Liberation Sans',sans-serif;color:#222;transform:scaleX(0.9924);">Эпюра секториальной координаты w</span>
<svg style="left:539px;top:212px;" width="7" height="5" viewBox="0 0 7 5"><path d="M0.500 0.500 H6.500 L3.500 4.500 Z" fill="#111"/></svg>
<div style="left:551px;top:207px;width:78px;height:14px;background:#ebe8d8;border:1px solid #c9c7ba;"></div>
<span class="t" id="t80" style="left:554px;top:210.00px;font:7px/9px 'Liberation Sans',sans-serif;color:#b8b5a6;transform:scaleX(0.9350);">Сочетание 1</span>
<svg style="left:620px;top:212px;" width="7" height="5" viewBox="0 0 7 5"><path d="M0.500 0.500 H6.500 L3.500 4.500 Z" fill="#a8a598"/></svg>
<div style="left:649px;top:208px;width:43px;height:12.5px;background:#fff;"></div>
<span class="t" id="t81" style="left:634px;top:210.00px;font:7px/9px 'Liberation Sans',sans-serif;color:#222;transform:scaleX(0.9871);">Шаг: 0.01</span>
<svg style="left:694px;top:208px;" width="15" height="12" viewBox="0 0 15 12"><path d="M1 1.500 H14 M1 1.500 V7 M5.500 1.500 V7 M10 1.500 V7 M14 1.500 V7 M1 5 H14" stroke="#9a9a90" fill="none" stroke-width="0.8"/><path d="M3 10 H6 M9 10 H12" stroke="#888" stroke-width="1"/></svg>
<div style="left:716px;top:207px;width:1px;height:14px;background:#c5c2b2;"></div>
<div style="left:717px;top:207px;width:1px;height:14px;background:#fff;"></div>
<div style="left:736px;top:208px;width:38px;height:12.5px;background:#fff;"></div>
<span class="t" id="t82" style="left:723.5px;top:210.00px;font:bold 7px/9px 'Liberation Sans',sans-serif;color:#222;letter-spacing:0.185px;">M :  1</span>
<svg style="left:776px;top:207px;" width="15" height="14" viewBox="0 0 15 14"><path d="M2 5 H8 V12 H2 Z M8 5 L10 3" stroke="#9a9a90" fill="none" stroke-width="0.9"/><path d="M11 1.500 L12.500 3.500 M11 10 L12.500 12 M12 6 L13 8" stroke="#888" stroke-width="0.9"/></svg>
<span class="t" id="t83" style="left:370px;top:223.50px;font:italic bold 10px/12px 'Liberation Sans',sans-serif;color:#111;text-decoration:underline;letter-spacing:0.114px;">Эпюра секториальной координаты w  (см2)</span>
<span class="t" id="t84" style="left:370px;top:241.00px;font:8px/10px 'Liberation Sans',sans-serif;color:#333;transform:scaleX(0.9645);">Экстремумы : Max =  33.113 см2; Min = -76.481 см2;</span>
<span class="t" id="t85" style="left:370px;top:254.00px;font:8px/10px 'Liberation Sans',sans-serif;color:#333;transform:scaleX(0.9744);">Базовые свойства : A =    8.027 см2; Iy1 =  535.040 см4; Iz1 =   49.942 см4; Jt =    0.107 см4; Jw=8107.466 см6;</span>
<svg style="left:367px;top:265px;" width="657" height="335" viewBox="367 265 657 335"><g stroke="#cfeaea" stroke-width="1" fill="none"><path d="M540.500 302.800 L733 355.500 L733 600"/><path d="M540.500 302.800 V545 L733 597.500"/><path d="M540.500 302.800 L583.500 271 L776 321 L733 355.500"/><path d="M583.500 271 V511 L540.500 545"/><path d="M776 321 V565 L733 600"/><path d="M583.500 511 L776 565"/></g><g stroke-width="1" fill="none"><path d="M652 295 V424" stroke="#e07a7a"/><path d="M652 424 V560" stroke="#6a6ad8"/><path d="M553 399 L648 424" stroke="#7a7ad0"/><path d="M648 424 L694 390" stroke="#8a8ad8"/><path d="M648 424 L772 458" stroke="#e06a6a"/><path d="M648 424 L610 461" stroke="#e8a0a0"/></g><path d="M639.500 320 V547 M639.500 330 L645 327 M639.500 338 L645 335 M639.500 346 L645 343 M639.500 354 L645 351 M639.500 362 L645 359 M639.500 370 L645 367 M639.500 378 L645 375 M639.500 386 L645 383 M639.500 394 L645 391 M639.500 402 L645 399 M639.500 410 L645 407 M639.500 418 L645 415 M639.500 426 L645 423 M639.500 434 L645 431 M639.500 442 L645 439 M639.500 450 L645 447 M639.500 458 L645 455 M639.500 466 L645 463 M639.500 474 L645 471 M639.500 482 L645 479 M639.500 490 L645 487 M639.500 498 L645 495 M639.500 506 L645 503 M639.500 514 L645 511 M639.500 522 L645 519 M639.500 530 L645 527 M639.500 538 L645 535 M639.500 546 L645 543 " stroke="#e07070" stroke-width="0.8" fill="none"/><g stroke="#7a8ae0" stroke-width="0.800" fill="none"><path d="M697 322.500 L737 326 L755 331.500 L767.500 344 L770 370 L754.300 383.500"/><path d="M712 328.500 L722 324.500 M724 331 L737 326 M735 334 L748 329 M746 337.500 L758 334 M752 343 L764 340 M754.300 350 L768 348 M754.300 358 L769 357 M754.300 366 L770 366 M754.300 374 L765 374"/></g><g stroke="#7a8ae0" stroke-width="0.800" fill="none"><path d="M561.600 483.500 L583.400 468 L578.800 510 L591 526.500 L613 543"/><path d="M561.600 492 L582 481 M561.600 500 L581 492 M561.600 508 L580 502 M561.600 516 L579.500 510 M565 525 L584 517 M574 531 L588 523 M586 534.500 L594 529 M598 538 L602 535"/></g><g stroke="#555" stroke-width="0.900" fill="none"><path d="M686.800 360.200 L623.400 415.500"/><circle cx="686.800" cy="360.200" r="4.800" fill="#fff"/><circle cx="623.400" cy="415.500" r="4.800" fill="#fff"/><path d="M652.500 384.500 L658.500 390.500 M658.500 384.500 L652.500 390.500"/><path d="M684.500 360.200 H689 M621 415.500 H625.500"/></g><path d="M754.300 383.500 V346.500 Q754 343 748 338 L653 311.500 Q648 310 645.800 314 Q644.800 316 644.800 319 V543 Q644.800 547 638 548.500 L572 530.500 Q568 529 565 526 Q561.600 522.500 561.600 519 V483.500" stroke="#555553" stroke-width="2.300" fill="none" stroke-linejoin="round"/><path d="M754.300 383.500 V346.500 Q754 343 748 338 L653 311.500 Q648 310 645.800 314 Q644.800 316 644.800 319 V543 Q644.800 547 638 548.500 L572 530.500 Q568 529 565 526 Q561.600 522.500 561.600 519 V483.500" stroke="#3a3a3a" stroke-width="1" fill="none" stroke-linejoin="round"/><g transform="translate(598.600 449.400) rotate(-34.500)"><rect x="-21" y="-4.500" width="42" height="9" fill="#fff" stroke="#3a3ac8" stroke-width="0.800"/><text x="0" y="2.400" font-family="Liberation Sans, sans-serif" font-size="6.500" fill="#3a3ac8" text-anchor="middle" textLength="36" lengthAdjust="spacingAndGlyphs">Min =-76.481</text></g><g transform="translate(619.800 566.300) rotate(-34.500)"><rect x="-21.500" y="-4.500" width="43" height="9" fill="#fff" stroke="#d83030" stroke-width="0.800"/><text x="0" y="2.400" font-family="Liberation Sans, sans-serif" font-size="6.500" fill="#d83030" text-anchor="middle" textLength="37" lengthAdjust="spacingAndGlyphs">Max = 33.113</text></g></svg>
<div style="left:367px;top:599px;width:657px;height:19px;background:#ece9d8;border-top:1px solid #fff;"></div>
<span class="t" id="t86" style="left:377px;top:603.50px;font:7px/9px 'Liberation Sans',sans-serif;color:#222;transform:scaleX(0.9717);">Изменение углов обзора :</span>
<svg style="left:475px;top:605px;" width="7" height="7" viewBox="0 0 7 7"><path d="M4 0.500 V6.500 L0.500 3.500 Z" fill="#333"/></svg>
<div style="left:488px;top:603px;width:32px;height:11px;background:#fff;"></div>
<span class="t" id="t87" style="left:490px;top:604.00px;font:7px/9px 'Liberation Sans',sans-serif;color:#222;letter-spacing:0.102px;">10</span>
<span class="t" id="t88" style="left:524.5px;top:604.00px;font:7px/9px 'Liberation Sans',sans-serif;color:#222;">o</span>
<svg style="left:548px;top:605px;" width="7" height="7" viewBox="0 0 7 7"><path d="M0.500 0.500 V6.500 L4 3.500 Z" fill="#333"/></svg>
<div style="left:565px;top:602px;width:1px;height:13px;background:#c5c2b2;"></div>
<div style="left:566px;top:602px;width:1px;height:13px;background:#fff;"></div>
<svg style="left:576px;top:606px;" width="7" height="7" viewBox="0 0 7 7"><path d="M0 0.500 H6 L3 4 Z" fill="#333"/></svg>
<div style="left:589px;top:603px;width:32px;height:11px;background:#fff;"></div>
<span class="t" id="t89" style="left:592px;top:604.00px;font:7px/9px 'Liberation Sans',sans-serif;color:#222;letter-spacing:0.102px;">10</span>
<span class="t" id="t90" style="left:625.5px;top:604.00px;font:7px/9px 'Liberation Sans',sans-serif;color:#222;">o</span>
<svg style="left:648px;top:606px;" width="7" height="7" viewBox="0 0 7 7"><path d="M0 4 H6 L3 0.500 Z" fill="#333"/></svg>
<div style="left:667px;top:602px;width:1px;height:13px;background:#c5c2b2;"></div>
<div style="left:668px;top:602px;width:1px;height:13px;background:#fff;"></div>
<svg style="left:676px;top:601px;" width="16" height="15" viewBox="0 0 16 15"><path d="M4 1 V13 M1 10 H14" stroke="#5a8ab8" stroke-width="1.300"/><rect x="6" y="3" width="7" height="6" fill="#cfe0f0" stroke="#7a9ac0"/></svg>
<svg style="left:696px;top:601px;" width="16" height="15" viewBox="0 0 16 15"><path d="M1 3 H14 M5 1 V13" stroke="#4a8aa8" stroke-width="1.300"/><rect x="6" y="5" width="7" height="7" fill="#b8e0ec" stroke="#5a9ab8"/></svg>
<svg style="left:715px;top:601px;" width="16" height="15" viewBox="0 0 16 15"><path d="M1 12 H14" stroke="#7a8aa0" stroke-width="1.300"/><rect x="3" y="2" width="8" height="8" fill="#e8d8e0" stroke="#9a9ab0"/><path d="M11 2 V12" stroke="#5a8ab8"/></svg>
<div style="left:738px;top:602px;width:1px;height:13px;background:#c5c2b2;"></div>
<div style="left:739px;top:602px;width:1px;height:13px;background:#fff;"></div>
<svg style="left:745px;top:601px;" width="16" height="15" viewBox="0 0 16 15"><path d="M2 1 L8 12 H15" stroke="#6aa8c8" stroke-width="1.300" fill="none"/><rect x="8" y="2" width="6" height="8" fill="#7ab0e0" stroke="#4a80c0"/><path d="M2 12 L5 8" stroke="#8ac88a" stroke-width="1.500"/></svg>
<div style="left:768px;top:602px;width:1px;height:13px;background:#c5c2b2;"></div>
<div style="left:769px;top:602px;width:1px;height:13px;background:#fff;"></div>
<div style="left:772px;top:602px;width:1px;height:13px;background:#c5c2b2;"></div>
<div style="left:367px;top:618px;width:657px;height:11px;background:#ece9d8;border-top:1px solid #d8d5c4;"></div>
<div style="left:367px;top:619.5px;width:77px;height:10px;background:#fff;border:1px solid #a8b4c8;"></div>
<span class="t" id="t91" style="left:369.5px;top:620.50px;font:6.5px/8px 'Liberation Sans',sans-serif;color:#333;transform:scaleX(0.7882);">Длина</span>
<svg style="left:437px;top:623px;" width="6" height="4" viewBox="0 0 6 4"><path d="M0 0 H6 L3 3.500 Z" fill="#222"/></svg>
<div style="left:446.5px;top:619.5px;width:79px;height:10px;background:#fff;border:1px solid #a8b4c8;"></div>
<span class="t" id="t92" style="left:449px;top:620.50px;font:6.5px/8px 'Liberation Sans',sans-serif;color:#333;transform:scaleX(0.8985);">метр</span>
<svg style="left:516px;top:623px;" width="6" height="4" viewBox="0 0 6 4"><path d="M0 0 H6 L3 3.500 Z" fill="#222"/></svg>
<div style="left:968px;top:619px;width:38px;height:10px;border:1px solid;border-color:#b8b5a5 #fff #fff #b8b5a5;"></div>
<span class="t" id="t93" style="left:985px;top:620.50px;font:6.5px/8px 'Liberation Sans',sans-serif;color:#333;letter-spacing:0.396px;">NUM</span>
<div style="left:366px;top:629px;width:658px;height:3px;background:linear-gradient(180deg,#5a9ae8,#2a6ad8);"></div>
</div>
</body></html>
